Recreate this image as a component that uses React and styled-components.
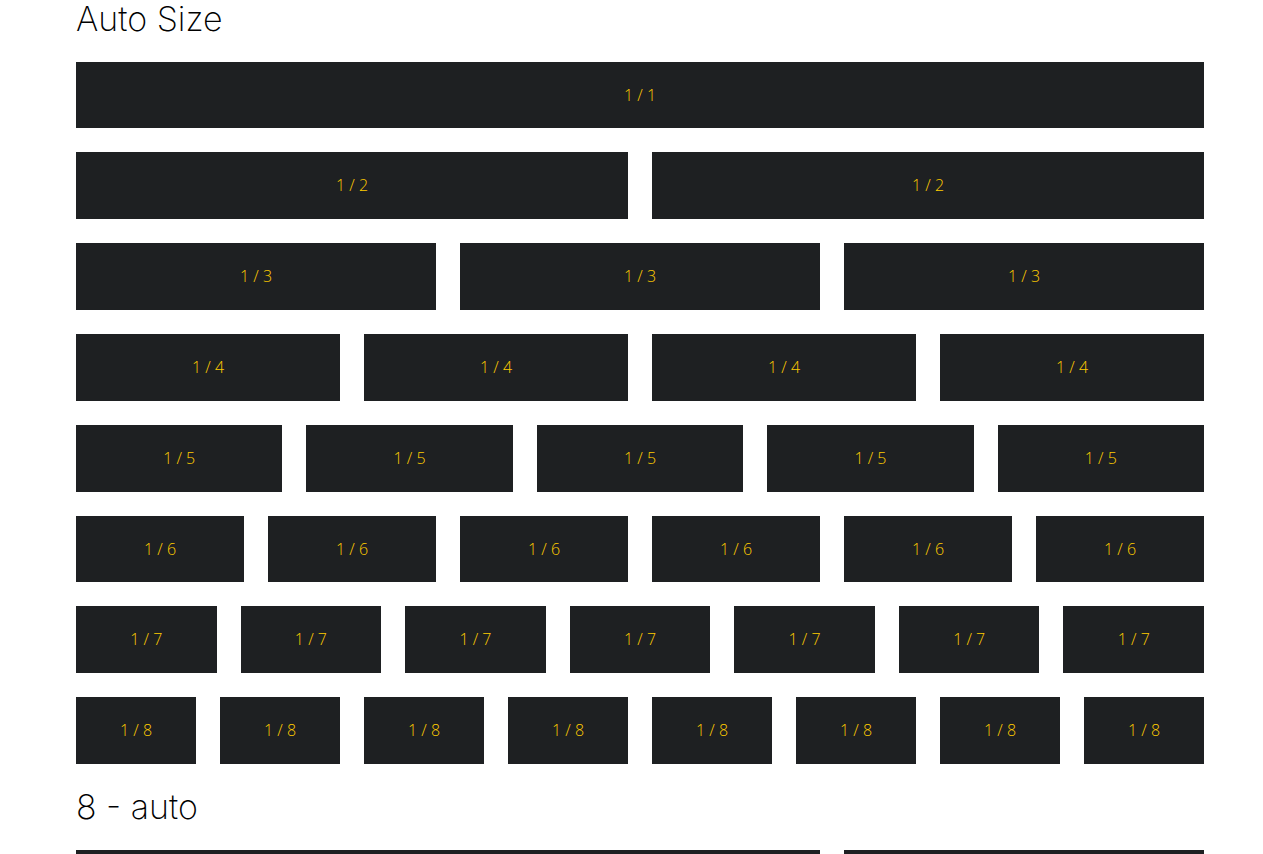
import React from "react";
import styled, { createGlobalStyle } from "styled-components";

const GlobalStyle = createGlobalStyle`
  * { box-sizing: border-box; }
  html { scrollbar-width: none; }
  body {
    margin: 0;
    background: #fff;
    color: #000;
    font-family: "Open Sans", Lato, sans-serif;
    font-size: 16px;
    font-weight: 300;
    line-height: 1.8;
  }
`;

const Page = styled.main`
  padding: 0 59px 24px 76px;
`;

const Section = styled.section`
  & + & {
    margin-top: 24px;
  }
`;

const Heading = styled.h2`
  margin: 0 0 24px;
  font-family: Inter, Lato, sans-serif;
  font-size: 34px;
  font-weight: 200;
  line-height: 2.35rem;
`;

const Rows = styled.div`
  display: grid;
  gap: 24px;
`;

const Row = styled.div`
  display: flex;
  gap: 24px;
`;

const Cell = styled.div`
  flex: 1 1 0;
  min-height: 66px;
  padding: 19px 0;
  background: #1e2022;
  color: #ffcc00;
  text-align: center;
`;

const SplitRow = styled(Row)`
  display: grid;
  grid-template-columns: repeat(12, 1fr);
`;

const SpanCell = styled(Cell)`
  grid-column: span ${({ $span }) => $span};
`;

const counts = [1, 2, 3, 4, 5, 6, 7, 8];

export default function App() {
  return (
    <>
      <GlobalStyle />
      <Page>
        <Section>
          <Heading>Auto Size</Heading>
          <Rows>
            {counts.map((count) => (
              <Row key={count}>
                {Array.from({ length: count }, (_, i) => (
                  <Cell key={i}>1 / {count}</Cell>
                ))}
              </Row>
            ))}
          </Rows>
        </Section>
        <Section>
          <Heading>8 - auto</Heading>
          <SplitRow>
            <SpanCell $span={8} />
            <SpanCell $span={4} />
          </SplitRow>
        </Section>
      </Page>
    </>
  );
}
